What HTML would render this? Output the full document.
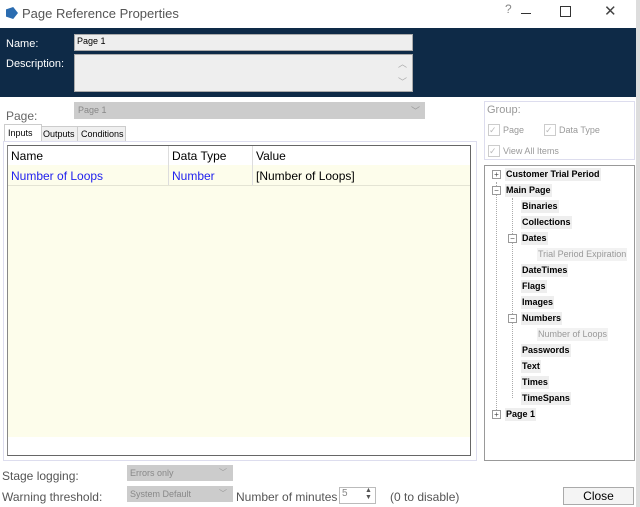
<!DOCTYPE html><html><head><style>
body{margin:0;width:640px;height:507px;overflow:hidden;background:#fff;font-family:"Liberation Sans",sans-serif;position:relative}
.a{position:absolute}
.t{font-size:11px;white-space:nowrap}
.tree div{position:absolute;font-size:9px;font-weight:bold;background:#eee;padding:0 1px;line-height:13px}
.tree .g{color:#999;font-weight:normal;background:#f2f2f2}
.bx{position:absolute;width:7px;height:7px;border:1px solid #999;background:#fff;font-size:8px;line-height:7px;text-align:center;color:#444}
</style></head><body>
<div class="a" style="left:636px;top:0;width:4px;height:507px;background:#ddd"></div>
<div class="a" style="left:6px;top:7px;width:12px;height:12px;background:#2b6cb0;clip-path:polygon(0 20%,60% 0,100% 50%,60% 100%,0 80%)"></div>
<div class="a t" style="left:22px;top:6px;font-size:13px;color:#555">Page Reference Properties</div>
<div class="a t" style="left:505px;top:2px;font-size:12px;color:#888">?</div>
<div class="a" style="left:521px;top:13px;width:10px;height:1px;background:#333"></div>
<div class="a" style="left:560px;top:6px;width:9px;height:9px;border:1px solid #333"></div>
<div class="a t" style="left:604px;top:2px;font-size:15px;color:#444">✕</div>
<div class="a" style="left:0;top:28px;width:636px;height:69px;background:#0e2a47"></div>
<div class="a t" style="left:6px;top:38px;color:#fff">Name:</div>
<div class="a t" style="left:6px;top:58px;color:#fff">Description:</div>
<div class="a" style="left:74px;top:34px;width:337px;height:15px;background:#eee;border:1px solid #aaa"></div>
<div class="a t" style="left:77px;top:36px;font-size:9px">Page 1</div>
<div class="a" style="left:74px;top:54px;width:337px;height:36px;background:#eee;border:1px solid #aaa"></div>
<div class="a t" style="left:398px;top:57px;font-size:9px;color:#aaa">︿</div>
<div class="a t" style="left:398px;top:75px;font-size:9px;color:#aaa">﹀</div>
<div class="a t" style="left:6px;top:109px;font-size:12px;color:#666">Page:</div>
<div class="a" style="left:74px;top:102px;width:351px;height:17px;background:#ccc"></div>
<div class="a t" style="left:78px;top:105px;font-size:9px;color:#888">Page 1</div>
<div class="a t" style="left:411px;top:104px;font-size:9px;color:#999">﹀</div>
<div class="a" style="left:4px;top:124px;width:36px;height:17px;background:#fff;border:1px solid #ccc;border-bottom:none"></div>
<div class="a" style="left:41px;top:126px;width:35px;height:15px;background:#f0f0f0;border:1px solid #ccc"></div>
<div class="a" style="left:77px;top:126px;width:47px;height:15px;background:#f0f0f0;border:1px solid #ccc"></div>
<div class="a t" style="left:8px;top:128px;font-size:9px">Inputs</div>
<div class="a t" style="left:43px;top:129px;font-size:9px">Outputs</div>
<div class="a t" style="left:81px;top:129px;font-size:9px">Conditions</div>
<div class="a" style="left:3px;top:141px;width:472px;height:318px;border:1px solid #dde;background:#fff"></div>
<div class="a" style="left:7px;top:145px;width:462px;height:309px;border:1px solid #666;border-left-color:#888;background:#fff"></div>
<div class="a" style="left:8px;top:165px;width:462px;height:272px;background:#fdfdeb"></div>
<div class="a" style="left:168px;top:146px;width:1px;height:39px;background:#ddd"></div>
<div class="a" style="left:252px;top:146px;width:1px;height:39px;background:#ddd"></div>
<div class="a" style="left:8px;top:185px;width:462px;height:1px;background:#e4e4d4"></div>
<div class="a t" style="left:11px;top:149px;font-size:12px">Name</div>
<div class="a t" style="left:172px;top:149px;font-size:12px">Data Type</div>
<div class="a t" style="left:256px;top:149px;font-size:12px">Value</div>
<div class="a t" style="left:11px;top:169px;font-size:12px;color:#2222ee">Number of Loops</div>
<div class="a t" style="left:172px;top:169px;font-size:12px;color:#2222ee">Number</div>
<div class="a t" style="left:256px;top:169px;font-size:12px">[Number of Loops]</div>
<div class="a" style="left:484px;top:101px;width:149px;height:57px;border:1px solid #dde"></div>
<div class="a t" style="left:487px;top:104px;font-size:11px;color:#999">Group:</div>
<div class="a" style="left:488px;top:124px;width:10px;height:10px;border:1px solid #ccc;color:#bbb;font-size:9px;line-height:10px">✓</div>
<div class="a t" style="left:503px;top:125px;font-size:9px;color:#999">Page</div>
<div class="a" style="left:544px;top:124px;width:10px;height:10px;border:1px solid #ccc;color:#bbb;font-size:9px;line-height:10px">✓</div>
<div class="a t" style="left:559px;top:125px;font-size:9px;color:#999">Data Type</div>
<div class="a" style="left:488px;top:145px;width:10px;height:10px;border:1px solid #ccc;color:#bbb;font-size:9px;line-height:10px">✓</div>
<div class="a t" style="left:503px;top:146px;font-size:9px;color:#999">View All Items</div>
<div class="a" style="left:484px;top:165px;width:149px;height:294px;border:1px solid #999"></div>
<div class="a" style="left:496px;top:182px;width:0;height:232px;border-left:1px dotted #aaa"></div>
<div class="a" style="left:512px;top:198px;width:0;height:200px;border-left:1px dotted #aaa"></div>
<div class="tree">
<span class="bx" style="left:492px;top:170px">+</span><div style="left:505px;top:168px">Customer Trial Period</div>
<span class="bx" style="left:492px;top:186px">−</span><div style="left:505px;top:184px">Main Page</div>
<div style="left:521px;top:200px">Binaries</div>
<div style="left:521px;top:216px">Collections</div>
<span class="bx" style="left:508px;top:234px">−</span><div style="left:521px;top:232px">Dates</div>
<div class="g" style="left:537px;top:248px">Trial Period Expiration</div>
<div style="left:521px;top:264px">DateTimes</div>
<div style="left:521px;top:280px">Flags</div>
<div style="left:521px;top:296px">Images</div>
<span class="bx" style="left:508px;top:314px">−</span><div style="left:521px;top:312px">Numbers</div>
<div class="g" style="left:537px;top:328px">Number of Loops</div>
<div style="left:521px;top:344px">Passwords</div>
<div style="left:521px;top:360px">Text</div>
<div style="left:521px;top:376px">Times</div>
<div style="left:521px;top:392px">TimeSpans</div>
<span class="bx" style="left:492px;top:410px">+</span><div style="left:505px;top:408px">Page 1</div>
</div>
<div class="a t" style="left:2px;top:469px;font-size:12px;color:#555">Stage logging:</div>
<div class="a t" style="left:2px;top:490px;font-size:12px;color:#555">Warning threshold:</div>
<div class="a" style="left:127px;top:465px;width:106px;height:16px;background:#ccc"></div>
<div class="a t" style="left:130px;top:468px;font-size:9px;color:#888">Errors only</div>
<div class="a t" style="left:219px;top:467px;font-size:8px;color:#999">﹀</div>
<div class="a" style="left:127px;top:486px;width:106px;height:16px;background:#ccc"></div>
<div class="a t" style="left:130px;top:489px;font-size:9px;color:#888">System Default</div>
<div class="a t" style="left:219px;top:488px;font-size:8px;color:#999">﹀</div>
<div class="a t" style="left:236px;top:490px;font-size:12px;color:#555">Number of minutes</div>
<div class="a" style="left:339px;top:487px;width:35px;height:15px;border:1px solid #bbb"></div>
<div class="a t" style="left:342px;top:488px;font-size:10px;color:#888">5</div>
<div class="a t" style="left:365px;top:487px;font-size:7px;line-height:7px;color:#555">▲<br>▼</div>
<div class="a t" style="left:390px;top:490px;font-size:12px;color:#555">(0 to disable)</div>
<div class="a" style="left:563px;top:487px;width:69px;height:16px;border:1px solid #aaa;background:#f4f4f4;font-size:12px;text-align:center;line-height:16px">Close</div>
</body></html>
